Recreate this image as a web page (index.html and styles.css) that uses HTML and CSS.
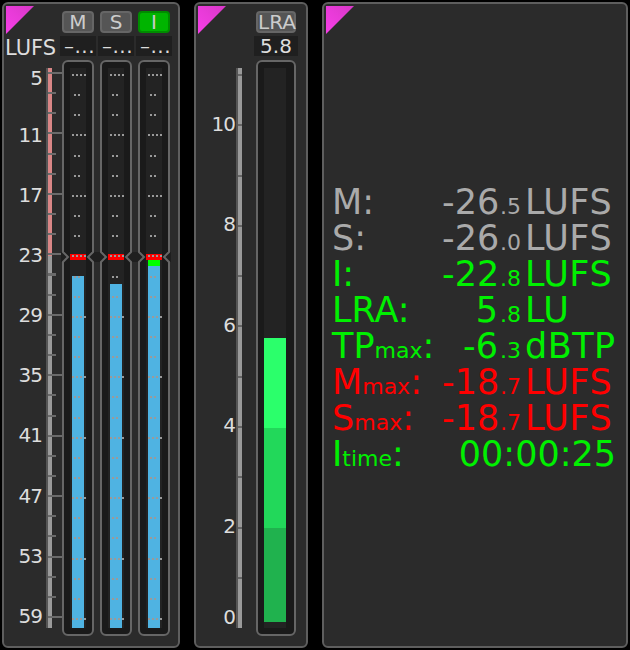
FILE: index.html
```html
<!DOCTYPE html>
<html lang="en">
<head>
    <meta charset="UTF-8">
    <title>Loudness meter</title>
    <link rel="stylesheet" href="styles.css">
</head>
<body>
    <div class="panel panel-loud">
        <div class="corner"></div>
        <div class="gutter">
            <div class="unit-label">LUFS</div>
            <div class="scale">
                <div class="scale-labels">
                    <div class="tick-label first">5</div>
                    <div class="tick-label">11</div>
                    <div class="tick-label">17</div>
                    <div class="tick-label">23</div>
                    <div class="tick-label">29</div>
                    <div class="tick-label">35</div>
                    <div class="tick-label">41</div>
                    <div class="tick-label">47</div>
                    <div class="tick-label">53</div>
                    <div class="tick-label">59</div>
                </div>
                <div class="strip strip-loud"></div>
            </div>
        </div>
        <div class="channels">
            <div class="channel">
                <div class="btn">M</div>
                <div class="value">–...</div>
                <div class="track">
                    <div class="lane">
                        <div class="bar" style="height: 352px"></div>
                        <div class="limit"></div>
                        <div class="dots minor"></div>
                        <div class="dots major"></div>
                    </div>
                </div>
            </div>
            <div class="channel">
                <div class="btn">S</div>
                <div class="value">–...</div>
                <div class="track">
                    <div class="lane">
                        <div class="bar" style="height: 344px"></div>
                        <div class="limit"></div>
                        <div class="dots minor"></div>
                        <div class="dots major"></div>
                    </div>
                </div>
            </div>
            <div class="channel">
                <div class="btn btn-on">I</div>
                <div class="value">–...</div>
                <div class="track">
                    <div class="lane">
                        <div class="bar-top" style="height: 6px"></div>
                        <div class="bar" style="height: 362px"></div>
                        <div class="limit"></div>
                        <div class="dots minor"></div>
                        <div class="dots major"></div>
                    </div>
                </div>
            </div>
            <!-- pinch in the track borders at the target level -->
            <svg class="notch" width="112" height="14" viewBox="0 0 112 14">
                <path class="notch-fill" d="M33 2 L28 7 L33 12 L41 12 L46 7 L41 2 Z"/>
                <path class="notch-fill" d="M71 2 L66 7 L71 12 L79 12 L84 7 L79 2 Z"/>
                <path class="notch-fill" d="M3 2 L8 7 L3 12 L1 12 L1 2 Z"/>
                <path class="notch-fill" d="M109 2 L104 7 L109 12 L111 12 L111 2 Z"/>
                <path class="notch-line" d="M3 1 L3 2 L8 7 L3 12 L3 13"/>
                <path class="notch-line" d="M33 1 L33 2 L28 7 L33 12 L33 13"/>
                <path class="notch-line" d="M41 1 L41 2 L46 7 L41 12 L41 13"/>
                <path class="notch-line" d="M71 1 L71 2 L66 7 L71 12 L71 13"/>
                <path class="notch-line" d="M79 1 L79 2 L84 7 L79 12 L79 13"/>
                <path class="notch-line" d="M109 1 L109 2 L104 7 L109 12 L109 13"/>
            </svg>
        </div>
    </div>

    <div class="panel panel-range">
        <div class="corner"></div>
        <div class="gutter gutter-range">
            <div class="scale">
                <div class="scale-labels labels-range">
                    <div class="tick-label">10</div>
                    <div class="tick-label">8</div>
                    <div class="tick-label">6</div>
                    <div class="tick-label">4</div>
                    <div class="tick-label">2</div>
                    <div class="tick-label last">0</div>
                </div>
                <div class="strip strip-range"></div>
            </div>
        </div>
        <div class="channel channel-range">
            <div class="btn">LRA</div>
            <div class="value value-range">5.8</div>
            <div class="track track-range">
                <div class="lane lane-range">
                    <div class="range-bar range-high" style="height: 90px"></div>
                    <div class="range-bar range-mid" style="height: 100px"></div>
                    <div class="range-bar range-low" style="height: 94px"></div>
                </div>
            </div>
        </div>
    </div>

    <div class="panel panel-text">
        <div class="corner"></div>
        <div class="readout">
            <div class="row grey"><span class="name">M:</span><span class="num">-26</span><span class="dec">.5</span><span class="unit">LUFS</span></div>
            <div class="row grey"><span class="name">S:</span><span class="num">-26</span><span class="dec">.0</span><span class="unit">LUFS</span></div>
            <div class="row green"><span class="name">I:</span><span class="num">-22</span><span class="dec">.8</span><span class="unit">LUFS</span></div>
            <div class="row green"><span class="name">LRA:</span><span class="num">5</span><span class="dec">.8</span><span class="unit">LU</span></div>
            <div class="row green"><span class="name">TP<small>max</small>:</span><span class="num">-6</span><span class="dec">.3</span><span class="unit">dBTP</span></div>
            <div class="row red"><span class="name">M<small>max</small>:</span><span class="num">-18</span><span class="dec">.7</span><span class="unit">LUFS</span></div>
            <div class="row red"><span class="name">S<small>max</small>:</span><span class="num">-18</span><span class="dec">.7</span><span class="unit">LUFS</span></div>
            <div class="row green"><span class="name">I<small>time</small>:</span><span class="time">00:00:25</span></div>
        </div>
    </div>
</body>
</html>
```

FILE: styles.css
```css
body {
    margin: 0;
    padding: 2px;
    width: 630px;
    height: 650px;
    box-sizing: border-box;
    overflow: hidden;
    background-color: #000;
    color: #ddd;
    font-family: "DejaVu Sans", sans-serif;
    font-size: 20px;
    display: flex;
    gap: 14px;
}

.panel {
    position: relative;
    display: flex;
    height: 646px;
    box-sizing: border-box;
    background-color: #2b2b2b;
    border: 2px solid #5e5e5e;
    border-radius: 6px;
}

.panel-loud { width: 178px; }
.panel-range { width: 114px; }
.panel-text { width: 306px; }

.corner {
    position: absolute;
    top: 2px;
    left: 2px;
    width: 28px;
    height: 28px;
    background: linear-gradient(45deg, #f83ee8, #d838c8);
    clip-path: polygon(0 0, 100% 0, 0 100%);
}

/* ---- scale on the left of the meters ---- */
.gutter {
    width: 56px;
    flex: none;
}

.gutter-range {
    width: 58px;
    padding-top: 64px;
}

.unit-label {
    height: 64px;
    box-sizing: border-box;
    padding-top: 33px;
    padding-left: 1px;
    font-size: 21px;
    line-height: 22px;
}

.scale {
    display: flex;
}

.scale-labels {
    width: 38px;
    margin-right: 1px;
    flex: none;
    text-align: right;
}

.tick-label {
    height: 60.1px;
    line-height: 60.1px;
    letter-spacing: -1px;
}

.tick-label.first {
    height: 37px;
    line-height: 20px;
}

.labels-range {
    width: 39px;
    padding-top: 5.7px;
}

.labels-range .tick-label {
    height: 100.6px;
    line-height: 100.6px;
}

.labels-range .tick-label.last {
    height: 81px;
    line-height: 81px;
}

.strip {
    position: relative;
    height: 560px;
    margin-left: 3px;
    box-sizing: border-box;
    border-left: 2px solid #555;
}

.strip-loud {
    width: 6px;
    background: linear-gradient(#d98686 0 188px, #9a9a9a 188px);
}

/* long ticks every 6 LU, short ones every 2 LU */
.strip-loud::before {
    content: "";
    position: absolute;
    top: 4px;
    left: 0;
    width: 8px;
    height: 550px;
    background: repeating-linear-gradient(#6a6a6a 0 2px, transparent 2px 20.15px);
}

.strip-loud::after {
    content: "";
    position: absolute;
    top: 4px;
    left: 0;
    width: 14px;
    height: 550px;
    background: repeating-linear-gradient(#6a6a6a 0 2px, transparent 2px 60.45px);
}

.strip-range {
    width: 6px;
    margin-left: 0;
    background: #9a9a9a;
}

.strip-range::after {
    content: "";
    position: absolute;
    top: 6px;
    left: 0;
    width: 4px;
    height: 510px;
    background: repeating-linear-gradient(#666 0 2px, transparent 2px 50.3px);
}

/* ---- meters ---- */
.channels {
    position: relative;
    display: flex;
    gap: 2px;
}

.channel {
    width: 36px;
    display: flex;
    flex-direction: column;
    padding-top: 7px;
}

.channel-range {
    width: 44px;
}

.btn {
    height: 22px;
    margin: 0 2px;
    box-sizing: border-box;
    background-color: #555;
    border: 2px solid #666;
    border-radius: 4px;
    color: #ccc;
    text-align: center;
    line-height: 18px;
    font-size: 20px;
}

.btn-on {
    background-color: #00b400;
    border-color: #008c00;
}

.value {
    height: 20px;
    margin-top: 3px;
    padding-left: 4px;
    background-color: #1f1f1f;
    line-height: 20px;
    letter-spacing: 0.5px;
    white-space: nowrap;
}

.value-range {
    padding-left: 0;
    letter-spacing: 0;
    text-align: center;
}

.track {
    height: 576px;
    margin: 4px 2px 0;
    box-sizing: border-box;
    padding: 6px;
    background-color: #1a1a1a;
    border: 2px solid #666;
    border-radius: 6px;
}

.track-range {
    width: 40px;
    margin-right: 0;
    padding: 6px 8px 6px 6px;
}

.lane {
    position: relative;
    height: 560px;
    background-color: #232323;
    display: flex;
    flex-direction: column;
    justify-content: flex-end;
    align-items: center;
}

.lane-range {
    padding-bottom: 6px;
    box-sizing: border-box;
}

.bar {
    width: 12px;
    background-color: #4fb3e2;
}

.bar-top {
    width: 12px;
    background-color: #00ff00;
}

.limit {
    position: absolute;
    top: 186px;
    left: 0;
    right: 0;
    height: 6px;
    background-color: #ff0000;
}

.dots {
    position: absolute;
    top: 6px;
    bottom: 8px;
    background-image: repeating-linear-gradient(90deg, #9a9a9a 0 2px, transparent 2px 4px);
}

.dots.major {
    left: 2px;
    width: 14px;
    -webkit-mask-image: repeating-linear-gradient(#000 0 2px, transparent 2px 60.45px);
    mask-image: repeating-linear-gradient(#000 0 2px, transparent 2px 60.45px);
}

.dots.minor {
    left: 4px;
    width: 6px;
    -webkit-mask-image: repeating-linear-gradient(transparent 0 20.15px, #000 20.15px 22.15px, transparent 22.15px 40.3px, #000 40.3px 42.3px, transparent 42.3px 60.45px);
    mask-image: repeating-linear-gradient(transparent 0 20.15px, #000 20.15px 22.15px, transparent 22.15px 40.3px, #000 40.3px 42.3px, transparent 42.3px 60.45px);
}

.notch {
    position: absolute;
    top: 246px;
    left: 0;
}

.notch-fill {
    fill: #1f1f1f;
}

.notch-line {
    fill: none;
    stroke: #666;
    stroke-width: 2;
}

.range-bar {
    width: 22px;
}

.range-high { background-color: #2bff6b; }
.range-mid { background-color: #22d85a; }
.range-low { background-color: #20b24e; }

/* ---- text readout ---- */
.readout {
    align-self: center;
    width: 100%;
    box-sizing: border-box;
    padding: 0 10px 0 8px;
    font-size: 35px;
    margin-top: 6px;
}

.row {
    display: flex;
    align-items: baseline;
    height: 36px;
    line-height: 36px;
    white-space: nowrap;
}

.grey { color: #aaa; }
.green { color: #00f000; }
.red { color: #ff0000; }

.name {
    width: 110px;
    flex: none;
}

.name small {
    font-size: 22px;
}

.num {
    width: 56px;
    flex: none;
    text-align: right;
}

.dec {
    width: 25px;
    flex: none;
    padding-left: 2px;
    font-size: 22px;
}

.unit {
    flex: none;
    letter-spacing: 0.5px;
}

.time {
    flex: 1;
    text-align: right;
}
```
